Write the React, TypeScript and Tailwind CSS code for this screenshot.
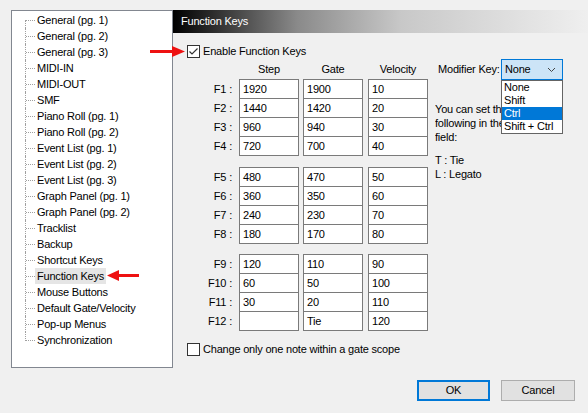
import React from 'react';

const treeItems = [
  'General (pg. 1)',
  'General (pg. 2)',
  'General (pg. 3)',
  'MIDI-IN',
  'MIDI-OUT',
  'SMF',
  'Piano Roll (pg. 1)',
  'Piano Roll (pg. 2)',
  'Event List (pg. 1)',
  'Event List (pg. 2)',
  'Event List (pg. 3)',
  'Graph Panel (pg. 1)',
  'Graph Panel (pg. 2)',
  'Tracklist',
  'Backup',
  'Shortcut Keys',
  'Function Keys',
  'Mouse Buttons',
  'Default Gate/Velocity',
  'Pop-up Menus',
  'Synchronization',
];

const groups = [
  [
    ['F1', '1920', '1900', '10'],
    ['F2', '1440', '1420', '20'],
    ['F3', '960', '940', '30'],
    ['F4', '720', '700', '40'],
  ],
  [
    ['F5', '480', '470', '50'],
    ['F6', '360', '350', '60'],
    ['F7', '240', '230', '70'],
    ['F8', '180', '170', '80'],
  ],
  [
    ['F9', '120', '110', '90'],
    ['F10', '60', '50', '100'],
    ['F11', '30', '20', '110'],
    ['F12', '', 'Tie', '120'],
  ],
];

const modifiers = ['None', 'Shift', 'Ctrl', 'Shift + Ctrl'];

const CheckBox: React.FC<{ checked?: boolean }> = ({ checked }) => (
  <span className="w-[13px] h-[13px] border border-[#333333] bg-white flex items-center justify-center shrink-0">
    {checked && (
      <svg width="11" height="11" viewBox="0 0 11 11">
        <polyline points="1.5,5.5 4,8 9.5,2.5" fill="none" stroke="#333333" strokeWidth="1.2" />
      </svg>
    )}
  </span>
);

const Cell: React.FC<{ value: string; first: boolean; className?: string }> = ({ value, first, className }) => (
  <div
    className={`w-[60px] h-[20px] border border-[#7a7a7a] bg-white pl-[3px] leading-[18px] ${first ? '' : '-mt-px'} ${className ?? ''}`}
  >
    {value}
  </div>
);

export default function App() {
  return (
    <div className="w-[588px] h-[413px] bg-[#f0f0f0] text-[11px] tracking-[-0.2px] text-black relative overflow-hidden font-['Liberation_Sans',Arial,sans-serif]">
      <div className="flex pt-[10px] pl-[11px]">
        {/* tree */}
        <div className="w-[162px] h-[358px] border border-[#828790] bg-white pt-[1px]">
          {treeItems.map((item, i) => (
            <div key={item} className="flex h-[16px] items-center">
              <div className="relative w-[23px] h-[16px] shrink-0">
                <span
                  className={`absolute left-[13px] w-0 border-l border-dotted border-[#a0a0a0] ${
                    i === 0 ? 'top-[8px] h-[8px]' : i === treeItems.length - 1 ? 'top-0 h-[9px]' : 'top-0 h-[16px]'
                  }`}
                />
                <span className="absolute left-[14px] top-[8px] w-[9px] h-0 border-t border-dotted border-[#a0a0a0]" />
              </div>
              <span
                className={`px-[2px] h-[16px] leading-[16px] whitespace-nowrap ${
                  item === 'Function Keys' ? 'bg-[#e5e5e5]' : ''
                }`}
              >
                {item}
              </span>
            </div>
          ))}
        </div>

        {/* panel */}
        <div className="flex-1 h-[358px] flex flex-col">
          <div className="h-[23px] leading-[23px] pl-[8px] text-white bg-[linear-gradient(to_right,#000000,#8a8a8a_30%,#c8c8c8_55%,#efefef)]">
            Function Keys
          </div>
          <div className="flex pl-[14px]">
            <div className="flex flex-col">
              <div className="mt-[10px] h-[16px] flex items-center">
                <CheckBox checked />
                <span className="ml-[3px]">Enable Function Keys</span>
              </div>
              <div className="flex h-[20px] items-center">
                <div className="w-[52px]" />
                <div className="w-[60px] text-center">Step</div>
                <div className="w-[60px] ml-[4px] text-center">Gate</div>
                <div className="w-[60px] ml-[5px] text-center">Velocity</div>
              </div>
              {groups.map((rows, g) => (
                <div key={g} className={`flex flex-col ${g === 0 ? '' : g === 1 ? 'mt-[11px]' : 'mt-[10px]'}`}>
                  {rows.map(([key, step, gate, vel], r) => (
                    <div key={key} className="flex">
                      <div className={`w-[52px] pr-[7px] text-right leading-[20px] ${r === 0 ? '' : '-mt-px'}`}>
                        {key} :
                      </div>
                      <Cell value={step} first={r === 0} />
                      <Cell value={gate} first={r === 0} className="ml-[4px]" />
                      <Cell value={vel} first={r === 0} className="ml-[5px]" />
                    </div>
                  ))}
                </div>
              ))}
              <div className="mt-[10px] h-[16px] flex items-center">
                <CheckBox />
                <span className="ml-[3px]">Change only one note within a gate scope</span>
              </div>
            </div>

            <div className="flex flex-col ml-[7px] pt-[26px]">
              <div className="flex h-[21px] items-center">
                <div className="w-[66px] pl-[3px] whitespace-nowrap">Modifier Key:</div>
                <div className="relative w-[62px] h-[21px] border border-[#0078d7] bg-[#cce4f7] flex items-center pl-[3px]">
                  <span className="flex-1">None</span>
                  <svg width="9" height="6" viewBox="0 0 9 6" className="mr-[6px]">
                    <polyline points="1,1 4.5,4.5 8,1" fill="none" stroke="#444444" strokeWidth="1" />
                  </svg>
                  <div className="absolute left-[-1px] top-[20px] w-[62px] border border-[#646464] bg-white z-10">
                    {modifiers.map((m) => (
                      <div
                        key={m}
                        className={`h-[13px] leading-[13px] pl-[2px] whitespace-nowrap ${
                          m === 'Ctrl' ? 'bg-[#0078d7] text-white' : ''
                        }`}
                      >
                        {m}
                      </div>
                    ))}
                  </div>
                </div>
              </div>
              {/* the open list hides the rest of these lines */}
              <div className="mt-[22px] w-[66px] overflow-hidden leading-[14px] whitespace-nowrap">
                <div>You can set the</div>
                <div>following in the Gate</div>
                <div>field:</div>
              </div>
              <div className="mt-[9px] leading-[14px] whitespace-nowrap">
                <div>T : Tie</div>
                <div>L : Legato</div>
              </div>
            </div>
          </div>
        </div>
      </div>

      {/* buttons */}
      <div className="flex justify-end gap-[11px] pr-[13px] mt-[12px]">
        <button className="w-[73px] h-[21px] border-2 border-[#0078d7] bg-[#e1e1e1] text-[11px]">OK</button>
        <button className="w-[74px] h-[21px] border border-[#adadad] bg-[#e1e1e1] text-[11px]">Cancel</button>
      </div>

      {/* red arrows */}
      <svg className="absolute left-[150px] top-[46px]" width="36" height="11" viewBox="0 0 36 11">
        <rect x="0" y="4" width="24" height="3" fill="#ee1111" />
        <polygon points="22,0 35,5.5 22,11" fill="#ee1111" />
      </svg>
      <svg className="absolute left-[107px] top-[270px]" width="33" height="11" viewBox="0 0 33 11">
        <polygon points="0,5.5 12,0 12,11" fill="#ee1111" />
        <rect x="10" y="4" width="22" height="3" fill="#ee1111" />
      </svg>
    </div>
  );
}
